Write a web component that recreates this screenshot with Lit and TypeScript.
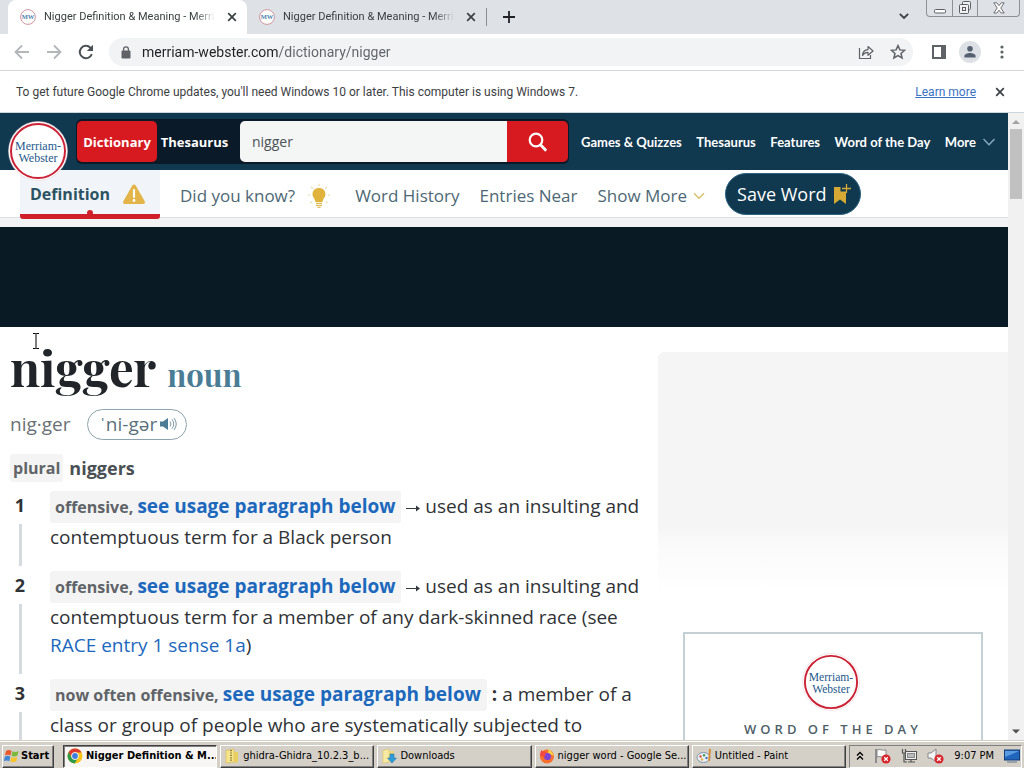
import { LitElement, html, svg, css, nothing } from "lit";
import { customElement, property } from "lit/decorators.js";

const WORD = "nigger";
const TITLE = "Nigger Definition & Meaning - Merriam-Webster";

const closeIcon = html`<svg viewBox="0 0 10 10" width="10" height="10" aria-hidden="true">
  <path d="M1.2 1.2 8.8 8.8M8.8 1.2 1.2 8.8" stroke="currentColor" stroke-width="1.7" fill="none" />
</svg>`;

@customElement("mw-seal")
class MwSeal extends LitElement {
  @property({ type: Number }) size = 60;
  static styles = css`
    :host { display: block; letter-spacing: normal; }
    svg { display: block; }
    text { font-family: "Liberation Serif", serif; font-weight: normal; fill: #24598c; }
  `;
  render() {
    return html`<svg viewBox="0 0 60 60" width=${this.size} height=${this.size} role="img" aria-label="Merriam-Webster">
      <circle cx="30" cy="30" r="29.5" fill="#fff" stroke="#e9c9cf" stroke-width=".5" />
      <circle cx="30" cy="30" r="27" fill="#fff" stroke="#cb2336" stroke-width="2" />
      <text x="30" y="29" font-size="12" text-anchor="middle">Merriam-</text>
      <text x="30" y="41" font-size="12" text-anchor="middle">Webster</text>
    </svg>`;
  }
}

@customElement("browser-chrome")
class BrowserChrome extends LitElement {
  static styles = css`
    :host { display: block; font-family: Roboto, sans-serif; color: #3c4043; }
    * { box-sizing: border-box; }
    button { border: 0; background: none; padding: 0; margin: 0; font: inherit; color: inherit; display: grid; place-items: center; }
    svg { display: block; }
    .strip { display: flex; align-items: flex-start; height: 34px; background: #dee1e6; }
    .tab { display: flex; align-items: center; gap: 8px; width: 239px; height: 34px; padding: 0 10px 0 12px; font-size: 11px; color: #3c4043; }
    .tab.on { background: #fff; border-radius: 8px 8px 0 0; margin-left: 8px; }
    .tab .name { flex: 1; overflow: hidden; white-space: nowrap; line-height: 20px; mask-image: linear-gradient(90deg, #000 86%, transparent 98%); }
    .sep { width: 1px; height: 18px; margin-top: 8px; background: #8b8f94; }
    .plus { width: 44px; height: 34px; color: #202124; }
    .caret { margin-left: auto; width: 28px; height: 32px; margin-right: 8px; color: #3c4043; }
    .win { display: grid; grid-template-columns: 25px 25px 42px; height: 17px; margin-right: 4px; border: 1px solid #8d9095; border-top: 0; border-radius: 0 0 4px 4px; color: #5d6166; }
    .win button + button { border-left: 1px solid #8d9095; }
    .bar { display: flex; align-items: center; height: 37px; padding: 0 12px 0 14px; border-bottom: 1px solid #d5d7da; background: #fff; }
    .nav { display: flex; gap: 16px; color: #b4b7ba; }
    .nav .reload { color: #4d5155; }
    .omni { flex: 1; display: flex; align-items: center; height: 28px; margin: 0 19px 0 15px; padding: 0 7px 0 12px; border-radius: 14px; background: #f1f3f4; color: #5f6368; }
    .omni input { flex: 1; min-width: 0; margin-left: 11px; padding: 0; border: 0; outline: 0; font: 14px/20px Roboto, sans-serif; color: transparent;
      background: linear-gradient(90deg, #202124 136px, #5f6368 136px); background-clip: text; -webkit-background-clip: text; }
    .omni .acts { display: flex; gap: 16px; }
    .tools { display: flex; align-items: center; gap: 13px; color: #5f6368; }
    .avatar { width: 22px; height: 22px; border-radius: 50%; background: #dde1e6; }
    .info { display: flex; align-items: center; height: 42px; padding: 0 19px 0 16px; font-size: 12px; border-bottom: 1px solid #cdd6da; background: #fff; color: #3c4043; }
    .info a { margin-left: auto; margin-right: 19px; color: #3a72c4; }
  `;

  tab(on: boolean) {
    return html`<div class="tab ${on ? "on" : ""}" role="tab" aria-selected=${on}>
      <svg viewBox="0 0 16 16" width="16" height="16" aria-hidden="true">
        <circle cx="8" cy="8" r="7.4" fill="#fff" stroke="#c98a96" stroke-width=".9" />
        <text x="8" y="10.300" font-size="6.500" font-weight="bold" font-family="Liberation Serif, serif" text-anchor="middle" fill="#4d7fae">MW</text>
      </svg>
      <span class="name">${TITLE}</span>
      <button aria-label="Close tab">${closeIcon}</button>
    </div>`;
  }

  render() {
    return html`
      <div class="strip">
        ${this.tab(true)} ${this.tab(false)}
        <span class="sep"></span>
        <button class="plus" aria-label="New tab"><svg viewBox="0 0 12 12" width="12" height="12"><path d="M6 0v12M0 6h12" stroke="currentColor" stroke-width="1.8" /></svg></button>
        <button class="caret" aria-label="Search tabs"><svg viewBox="0 0 10 6" width="10" height="6"><path d="M.8.8 5 5 9.200.8" fill="none" stroke="currentColor" stroke-width="1.8" /></svg></button>
        <div class="win">
          <button aria-label="Minimize"><svg viewBox="0 0 12 14" width="12" height="14"><rect x=".5" y="8.500" width="11" height="3.500" rx="1" fill="#fff" stroke="currentColor" /></svg></button>
          <button aria-label="Restore"><svg viewBox="0 0 14 14" width="14" height="14" fill="#eef0f2" stroke="currentColor"><rect x="4.500" y=".5" width="8" height="8" rx="1" /><rect x="1.500" y="3.500" width="9" height="9" rx="1" /><rect x="4.500" y="6.500" width="3" height="3" /></svg></button>
          <button aria-label="Close window"><svg viewBox="0 0 12 12" width="12" height="12"><path d="M.8.8h3L6 3.700 8.200.8h3L7.800 6l3.400 5h-3L6 8.200 3.800 11h-3L4.200 6z" fill="#fff" stroke="currentColor" stroke-width=".9" /></svg></button>
        </div>
      </div>
      <div class="bar">
        <div class="nav">
          <button aria-label="Back"><svg viewBox="0 0 16 16" width="16" height="16"><path d="M15 8H2M8 1.500 1.500 8 8 14.500" fill="none" stroke="currentColor" stroke-width="1.800" /></svg></button>
          <button aria-label="Forward"><svg viewBox="0 0 16 16" width="16" height="16"><path d="M1 8h13M8 1.500 14.500 8 8 14.500" fill="none" stroke="currentColor" stroke-width="1.800" /></svg></button>
          <button class="reload" aria-label="Reload"><svg viewBox="0 0 16 16" width="16" height="16"><path d="M13.800 10.200A6.200 6.200 0 1 1 12.400 3.700L14 5.300" fill="none" stroke="currentColor" stroke-width="2" /><path d="M15 .8v6.200H8.800z" fill="currentColor" /></svg></button>
        </div>
        <div class="omni">
          <svg viewBox="0 0 10 13" width="10" height="13"><rect x=".5" y="4.500" width="9" height="8" rx="1" fill="currentColor" /><path d="M2.600 5V3.200a2.400 2.400 0 0 1 4.800 0V5" fill="none" stroke="currentColor" stroke-width="1.300" /></svg>
          <input aria-label="Address" .value=${"merriam-webster.com/dictionary/" + WORD} />
          <div class="acts">
            <button aria-label="Share"><svg viewBox="0 0 16 16" width="16" height="16" fill="none" stroke="currentColor" stroke-width="1.200"><path d="M1.500 4v10.500h11V11" /><path d="M4.500 11.500C4.700 7.700 6.800 5.800 10 5.600V2.500L15 7l-5 4.300V8.400c-2.600 0-4.300 1-5.500 3.100z" stroke-linejoin="round" /></svg></button>
            <button aria-label="Bookmark"><svg viewBox="0 0 16 16" width="16" height="16"><path d="m8 1.600 1.900 4.300 4.700.4-3.600 3.100 1.100 4.600L8 11.600 3.900 14 5 9.400 1.400 6.300l4.700-.4z" fill="none" stroke="currentColor" stroke-width="1.500" /></svg></button>
          </div>
        </div>
        <div class="tools">
          <button aria-label="Side panel"><svg viewBox="0 0 14 14" width="14" height="14"><rect x="1" y="1" width="12" height="12" fill="none" stroke="currentColor" stroke-width="2" /><path d="M9 0h5v14H9z" fill="currentColor" /></svg></button>
          <button class="avatar" aria-label="Profile"><svg viewBox="0 0 14 14" width="14" height="14" fill="#566070"><circle cx="7" cy="3.800" r="2.800" /><path d="M1.400 12.600V11c0-2 3.200-3 5.600-3s5.600 1 5.600 3v1.600z" /></svg></button>
          <button aria-label="Menu"><svg viewBox="0 0 18 14" width="18" height="14" fill="currentColor"><circle cx="8" cy="2" r="1.600" /><circle cx="8" cy="7" r="1.600" /><circle cx="8" cy="12" r="1.600" /></svg></button>
        </div>
      </div>
      <div class="info">
        <span>To get future Google Chrome updates, you'll need Windows 10 or later. This computer is using Windows 7.</span>
        <a href="#">Learn more</a>
        <button aria-label="Dismiss">${closeIcon}</button>
      </div>`;
  }
}

@customElement("site-header")
class SiteHeader extends LitElement {
  static styles = css`
    :host { display: block; }
    * { box-sizing: border-box; }
    button { border: 0; padding: 0; margin: 0; font: inherit; color: inherit; background: none; }
    a { color: inherit; text-decoration: none; }
    svg { display: block; flex: none; }
    .top { position: relative; display: flex; align-items: center; height: 57px; padding: 0 13px 0 76px; background: #10384f; color: #fff; }
    .logo { position: absolute; left: 8px; top: 8px; z-index: 1; }
    .find { display: flex; height: 45px; padding: 2px 1px; border-radius: 6px; background: #0a1a28; font: bold 13px/40px "Open Sans", sans-serif; margin-right: 12px; }
    .kind { width: 80px; border-radius: 5px; text-align: center; }
    .kind.on { background: #d71920; }
    .kind.off { width: 83px; padding-right: 8px; }
    .find input { width: 267px; padding: 0 12px; border: 0; outline: 0; border-radius: 5px 0 0 5px; background: #f4f5f5; color: #4a5358; font: 14px/20px "Open Sans", sans-serif; }
    .go { width: 61px; display: grid; place-items: center; border-radius: 0 5px 5px 0; background: #d71920; }
    .links { flex: 1; display: flex; justify-content: space-between; font: bold 13px/20px Lato, sans-serif; white-space: nowrap; }
    .more { display: flex; align-items: center; gap: 7px; }
    .sub { display: flex; height: 48px; padding-left: 20px; background: #fff; border-bottom: 1px solid #dcdfe1; font: 17px/24px "Open Sans", sans-serif; color: #4d6874; white-space: nowrap; }
    .sub a { display: flex; align-items: center; padding-top: 4px; margin-right: 20px; }
    .sub a.on { position: relative; width: 140px; height: 49px; padding: 4px 14px 0 10px; justify-content: space-between; background: #f1f5f9; border-bottom: 5px solid #cf1f28; border-radius: 0 0 3px 3px; font-size: 16px; font-weight: 700; color: #2b5361; }
    .sub a.on::after { content: ""; position: absolute; left: 67px; bottom: -2px; width: 6px; height: 6px; border-radius: 50%; background: #cf1f28; }
    .know { gap: 12px; }
    .sub .know { margin-right: 24px; }
    .show { gap: 6px; }
    .sub .save { display: flex; align-items: center; justify-content: space-between; width: 136px; height: 42px; margin-top: 3px; padding: 0 8px 0 11px; border: 1px solid #2c6483; border-radius: 21px; background: #10384f; color: #fff; font-size: 18px; }
    .rule { height: 9px; background: #f1f3f5; }
  `;
  render() {
    return html`
      <header class="top">
        <a class="logo" href="#"><mw-seal size="60"></mw-seal></a>
        <form class="find" @submit=${(e: Event) => e.preventDefault()}>
          <button type="button" class="kind on">Dictionary</button>
          <button type="button" class="kind off">Thesaurus</button>
          <input aria-label="Search" .value=${WORD} />
          <button class="go" aria-label="Look up"><svg viewBox="0 0 20 20" width="20" height="20"><circle cx="8" cy="8" r="6.300" fill="none" stroke="#fff" stroke-width="2.200" /><path d="m12.500 12.800 5.700 6" stroke="#fff" stroke-width="2.800" /></svg></button>
        </form>
        <nav class="links">
          ${["Games & Quizzes", "Thesaurus", "Features", "Word of the Day"].map((t) => html`<a href="#">${t}</a>`)}
          <a class="more" href="#">More <svg viewBox="0 0 12 8" width="12" height="8"><path d="M.5 1 6 6.800 11.500 1" fill="none" stroke="#88abc4" stroke-width="1.400" /></svg></a>
        </nav>
      </header>
      <nav class="sub">
        <a class="on" href="#">Definition
          <svg viewBox="0 0 24 22" width="24" height="22"><path d="M12 1.500c.8 0 1.300.4 1.700 1.100l9 15.600c.8 1.500 0 2.800-1.700 2.800H3c-1.700 0-2.500-1.300-1.700-2.800l9-15.600c.4-.7.900-1.100 1.700-1.100z" fill="#e3b448" /><path d="M12 7v7" stroke="#fff" stroke-width="2.200" stroke-linecap="round" /><circle cx="12" cy="17.500" r="1.400" fill="#fff" /></svg></a>
        <a class="know" href="#">Did you know?
          <svg viewBox="0 0 24 26" width="24" height="26"><path d="M12 5c3.900 0 6.500 2.700 6.500 6.200 0 2.900-2.700 4.500-3 8H8.500c-.3-3.500-3-5.100-3-8C5.500 7.700 8.100 5 12 5z" fill="#e0b43c" /><path d="M9 20.700h6M9 22.700h6M10.500 24.500h3" stroke="#dfbc5c" stroke-width="1.200" /><path d="M12 .8v2.400M4.200 4l1.600 1.700M19.800 4l-1.600 1.700M.8 12h2.400M20.800 12h2.400M3.600 20l1.700-1.600M20.400 20l-1.700-1.600" stroke="#e9d9a8" stroke-width="1.100" /></svg></a>
        <a href="#">Word History</a>
        <a href="#">Entries Near</a>
        <a class="show" href="#">Show More <svg viewBox="0 0 12 8" width="12" height="8"><path d="M1 1.200 6 6.200 11 1.200" fill="none" stroke="#d9bf68" stroke-width="1.400" /></svg></a>
        <button class="save">Save Word
          <svg viewBox="0 0 20 22" width="20" height="22"><path d="M2 4h6.500v4.500H14V21l-6-4.500L2 21z" fill="#d6a935" /><path d="M14.500 1v9M10 5.500h9" stroke="#d6a935" stroke-width="1.300" /></svg></button>
      </nav>
      <div class="rule"></div>`;
  }
}

interface Sense { label: string; lead: "arrow" | "colon"; text: string; link?: string; }

const SENSES: Sense[] = [
  { label: "offensive,", lead: "arrow", text: "used as an insulting and contemptuous term for a Black person" },
  { label: "offensive,", lead: "arrow", text: "used as an insulting and contemptuous term for a member of any dark-skinned race (see ", link: "RACE entry 1 sense 1a" },
  { label: "now often offensive,", lead: "colon", text: "a member of a class or group of people who are systematically subjected to" },
];

@customElement("dictionary-entry")
class DictionaryEntry extends LitElement {
  static styles = css`
    :host { display: block; padding: 12px 0 0 10px; font: 19px/28px "Open Sans", sans-serif; color: #303336; }
    * { box-sizing: border-box; }
    a { color: #1c68bd; text-decoration: none; }
    .head { display: flex; align-items: baseline; gap: 11px; height: 58px; }
    h1, h2 { margin: 0; font-family: "Playfair Display", "Liberation Serif", serif; font-weight: bold; line-height: 56px; }
    h1 { font-size: 49px; color: #212529; }
    h2 { font-size: 31px; color: #4a7d95; }
    .say { display: flex; align-items: center; gap: 16px; height: 32px; margin-top: 11px; color: #6a7175; }
    .say button { display: flex; align-items: center; gap: 3px; height: 31px; padding: 0 9px 0 12px; border: 1px solid #8ea3ad; border-radius: 16px; background: #fff; font: inherit; color: #5b707b; }
    .plural { display: flex; align-items: center; gap: 6px; height: 28px; margin-top: 14px; font-weight: 700; color: #4a4f53; }
    .plural span + span { font-size: 18px; }
    .tag { background: #f4f4f4; border-radius: 3px; font-size: 16px; font-weight: 700; color: #606468; }
    .plural .tag { padding: 0 3px; }
    ol { list-style: none; margin: 9px 0 0; padding: 0; }
    li { display: grid; grid-template-columns: 20px minmax(0, 1fr); column-gap: 20px; }
    .num { display: flex; flex-direction: column; align-items: center; font-size: 18px; font-weight: 700; line-height: 28px; }
    .num i { flex: 1; width: 3px; margin: 5px 0; background: #d5dade; }
    p { margin: 0 0 20px; }
    p .tag { display: inline-block; padding: 0 6px 0 5px; line-height: 31px; }
    .tag a { font-size: 19px; }
    .arrow { display: inline-block; }
    b { font-weight: 700; }
  `;
  render() {
    return html`
      <div class="head"><h1>${WORD}</h1><h2>noun</h2></div>
      <div class="say"><span>nig·ger</span>
        <button aria-label="Listen">ˈni-gər
          <svg viewBox="0 0 17 14" width="17" height="14"><path d="M0 4.500h3L8 1v12L3 9.500H0z" fill="#4c7c96" /><path d="M10 4.500q2 2.500 0 5M12 2.500q3.600 4.500 0 9M14 1q4.500 6 0 12" fill="none" stroke="#7e9aa8" stroke-width="1" /></svg>
        </button></div>
      <div class="plural"><span class="tag">plural</span><span>niggers</span></div>
      <ol>${SENSES.map((s, i) => html`<li>
        <div class="num">${i + 1}<i></i></div>
        <p><span class="tag">${s.label} <a href="#">see usage paragraph below</a></span>
          ${s.lead === "arrow"
            ? html`<svg class="arrow" viewBox="0 0 14 8" width="14" height="9"><path d="M0 4h11" stroke="#33383c" /><path d="M10 1l4 3-4 3z" fill="#33383c" /></svg>`
            : html`<b>:</b>`}
          ${s.text}${s.link ? html`<a href="#">${s.link}</a>)` : nothing}</p>
      </li>`)}</ol>`;
  }
}

const flag = svg`<path d="M2 1v14" stroke="#777" stroke-width="1.500"/><path d="M3 2c3-1.500 5 1 9 0v7c-4 1-6-1.500-9 0z" fill="#fff" stroke="#888"/>`;
const pc = svg`<rect x="4.500" y="3.500" width="11" height="8" fill="#f2f2f2" stroke="#555"/><rect x="6.500" y="5.500" width="7" height="4" fill="#b9bdc0" stroke="#888"/><path d="M7 14h7M10 12v2M1.500 1v4h3V1M3 5v9h3" fill="none" stroke="#555" stroke-width="1.200"/>`;
const speaker = svg`<path d="M1 5h3l5-4v13l-5-4H1z" fill="#f6f6f6" stroke="#888"/>`;
const alertBadge = svg`<circle cx="12" cy="11" r="4.600" fill="#d7262c"/><path d="m10.200 9.200 3.600 3.600m0-3.600-3.600 3.600" stroke="#fff" stroke-width="1.300"/>`;

const TASKS = [
  { title: "Nigger Definition & M...", icon: svg`<circle cx="8" cy="8" r="7.500" fill="#f8c51c"/><path d="M1.500 4.300A7.500 7.500 0 0 1 14.600 4.400H8A3.600 3.600 0 0 0 4.800 9.700z" fill="#de3b30"/><path d="M1.500 4.300A7.500 7.500 0 0 0 7.600 15.500L11 10A3.600 3.600 0 0 1 4.800 9.700z" fill="#2d9a4b"/><circle cx="8" cy="8" r="3.700" fill="#fff"/><circle cx="8" cy="8" r="2.900" fill="#3d7de0"/>` },
  { title: "ghidra-Ghidra_10.2.3_b...", icon: svg`<path d="M2 2.500 10 1v13l-8 1z" fill="#f6e58c" stroke="#d6b94a" stroke-width=".6"/><path d="M10 4h4v10l-4 1z" fill="#e9cf62"/><path d="M7 2v12" stroke="#8a7a3a" stroke-width="1.800" stroke-dasharray="1.200 1.200"/>` },
  { title: "Downloads", icon: svg`<path d="M2 2.500 8 1v13l-6 1z" fill="#f8eaa2" stroke="#dcc25e" stroke-width=".6"/><path d="M8 3h5v11H8z" fill="#ecd679"/><path d="M9 6h4v4h2.500L11 15 6.500 10H9z" fill="#2f9bd8" stroke="#1670aa" stroke-width=".5"/>` },
  { title: "nigger word - Google Se...", icon: svg`<circle cx="8" cy="8.500" r="7" fill="#f8702d"/><path d="M10 .5c.5 2 4 3.500 5 7.500-2-2-6-1-6-4z" fill="#ffd23e"/><circle cx="8.500" cy="8.500" r="3.500" fill="#7b43d6"/><path d="M1 7c0-2 1-3 1-5 2 2 4 1 6 3-3 0-3 2-1 3-2 1-4 1-6-1z" fill="#f34a3f"/>` },
  { title: "Untitled - Paint", icon: svg`<ellipse cx="7.500" cy="9.500" rx="6.500" ry="5" fill="#e8eef4" stroke="#7f97ad"/><circle cx="4.500" cy="8.500" r="1.200" fill="#d9534a"/><circle cx="8" cy="7.200" r="1.200" fill="#3f9b58"/><circle cx="10.500" cy="10" r="1.200" fill="#3e74cf"/><circle cx="6" cy="11.500" r="1.200" fill="#e4b23a"/><path d="m14 1-1 12" stroke="#d38b2c" stroke-width="1.800"/>` },
];

@customElement("task-bar")
class TaskBar extends LitElement {
  static styles = css`
    :host { display: flex; align-items: center; gap: 3px; height: 28px; padding: 3px 2px 0; box-sizing: border-box; border-top: 1px solid #d4d0c8; box-shadow: inset 0 1px #fff; background: #d4d0c8; font: 11px/16px "DejaVu Sans Condensed", sans-serif; color: #000; }
    * { box-sizing: border-box; }
    svg { display: block; flex: none; }
    button { display: flex; align-items: center; gap: 3px; height: 23px; margin: 0; padding: 0 0 0 3px; font: inherit; color: inherit; background: #d4d0c8; border: 1px solid; border-color: #fff #404040 #404040 #fff; box-shadow: inset -1px -1px #808080; overflow: hidden; white-space: nowrap; }
    .start { width: 52px; gap: 1px; padding: 0 1px; font-weight: bold; margin-right: 6px; }
    .tasks { flex: 1; min-width: 0; display: grid; grid-template-columns: repeat(5, minmax(0, 1fr)); gap: 3px; }
    .tasks .on { font-weight: bold; background: #f7f6f4; border-color: #404040 #fff #fff #404040; box-shadow: inset 1px 1px #808080; }
    .tray { display: flex; align-items: center; justify-content: space-between; width: 173px; height: 23px; padding: 0 1px 0 6px; border: 1px solid; border-color: #808080 #fff #fff #808080; }
  `;
  render() {
    return html`
      <button class="start"><svg viewBox="0 0 16 16" width="16" height="16"><path d="M2 3c2-1.500 4-1 5.500 0L6.500 7.500c-1.500-1-3.500-1-5.500 0z" fill="#e8592b" /><path d="M8.500 3.300c2 1 4 1 6-.3L13.500 7.500c-2 1.200-4 1.200-6 .3z" fill="#7cb83a" /><path d="M.8 8.700c2-1.200 4-1 5.500 0l-1 4.500c-1.500-1-3.500-1-5.500 0z" fill="#3f86d4" /><path d="M7.300 9c2 1 4 .8 6-.3l-1 4.500c-2 1.300-4 1.200-6 .3z" fill="#f5c32c" /></svg>Start</button>
      <div class="tasks">${TASKS.map((t, i) => html`<button class=${i ? "" : "on"}><svg viewBox="0 0 16 16" width="16" height="16">${t.icon}</svg>${t.title}</button>`)}</div>
      <div class="tray">
        <svg viewBox="0 0 8 10" width="8" height="10"><path d="m1 4.500 3-3 3 3M1 8.500l3-3 3 3" fill="none" stroke="#000" stroke-width="1.300" /></svg>
        <svg viewBox="0 0 17 16" width="17" height="16">${flag}${alertBadge}</svg>
        <svg viewBox="0 0 17 16" width="17" height="16">${pc}</svg>
        <svg viewBox="0 0 17 16" width="17" height="16">${speaker}${alertBadge}</svg>
        <time>9:07 PM</time>
        <svg viewBox="0 0 16 16" width="16" height="16"><rect x=".5" y="2" width="15" height="10" fill="#2265bd" stroke="#143e78" /><path d="M1 3h14L1 9z" fill="#5b9be2" /><path d="M3 14h10" stroke="#8894a0" stroke-width="1.500" /></svg>
      </div>`;
  }
}

@customElement("app-root")
class AppRoot extends LitElement {
  static styles = css`
    :host { position: relative; display: flex; flex-direction: column; height: 100vh; overflow: hidden; background: #fff; }
    * { box-sizing: border-box; }
    .view { flex: 1; min-height: 0; display: flex; }
    .page { flex: 1; min-width: 0; overflow: hidden; }
    .banner { height: 100px; background: #0a1a25; }
    .cols { display: grid; grid-template-columns: minmax(0, 1fr) 350px; column-gap: 8px; }
    .ad { height: 240px; margin-top: 25px; border-radius: 6px 0 0 0; background: linear-gradient(#f5f5f5 72%, #fafafa 80%, #fff); }
    .wotd { display: flex; flex-direction: column; align-items: center; gap: 8px; margin: 40px 25px 0; padding: 19px 0 40px; border: 2px solid #c5d0d5; font: 600 13px/20px "Open Sans", sans-serif; letter-spacing: 4px; color: #4f5f68; }
    .wotd mw-seal { margin-right: 4px; }
    .wotd a { color: inherit; text-decoration: none; }
    .scroll { width: 16px; display: flex; flex-direction: column; align-items: center; background: #f1f1f1; }
    .scroll svg { display: block; flex: none; }
    .thumb { width: 12px; height: 70px; margin-bottom: auto; background: #c1c1c1; }
    .caret { position: absolute; left: 32px; top: 333px; }
  `;
  render() {
    return html`
      <browser-chrome></browser-chrome>
      <div class="view">
        <div class="page">
          <site-header></site-header>
          <div class="banner"></div>
          <main class="cols">
            <dictionary-entry></dictionary-entry>
            <aside>
              <div class="ad"></div>
              <section class="wotd"><mw-seal size="58"></mw-seal><a href="#">WORD OF THE DAY</a></section>
            </aside>
          </main>
        </div>
        <div class="scroll">
          <svg viewBox="0 0 16 16" width="16" height="16"><path d="M4 11 8 7l4 4z" fill="#a3a3a3" /></svg>
          <div class="thumb"></div>
          <svg viewBox="0 0 16 16" width="16" height="16"><path d="M4 5.500h8l-4 4z" fill="#505050" /></svg>
        </div>
      </div>
      <task-bar></task-bar>
      <svg class="caret" viewBox="0 0 8 16" width="8" height="16" aria-hidden="true"><path d="M1 .5h2.500l.5.5.5-.5H7M4 1v14M1 15.500h2.500L4 15l.5.5H7" fill="none" stroke="#000" /></svg>`;
  }
}
